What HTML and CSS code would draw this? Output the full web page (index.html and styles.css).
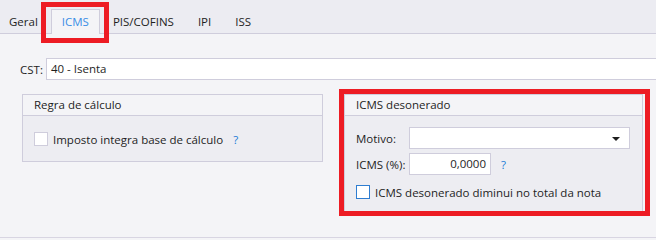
FILE: index.html
```html
<!DOCTYPE html>
<html lang="pt-BR">
<head>
  <meta charset="UTF-8" />
  <meta name="viewport" content="width=device-width, initial-scale=1.0" />
  <title>Tributação</title>
  <link rel="stylesheet" href="styles.css">
</head>
<body>
  <div class="tabs">
    <span class="tab">Geral</span>
    <span class="tab active">ICMS<span class="mark"></span></span>
    <span class="tab">PIS/COFINS</span>
    <span class="tab">IPI</span>
    <span class="tab">ISS</span>
  </div>

  <div class="content">
    <div class="cst-row">
      <label>CST:</label>
      <div class="field">40 - Isenta</div>
    </div>

    <div class="groups">
      <div class="group regra">
        <div class="group-title">Regra de cálculo</div>
        <div class="group-body">
          <div class="check-row">
            <span class="checkbox"></span>
            <span>Imposto integra base de cálculo</span>
            <span class="help">?</span>
          </div>
        </div>
      </div>

      <div class="group deson">
        <div class="group-title">ICMS desonerado</div>
        <div class="group-body">
          <div class="form-row">
            <label>Motivo:</label>
            <div class="field select"><span class="arrow"></span></div>
          </div>
          <div class="form-row">
            <label>ICMS (%):</label>
            <div class="field number">0,0000</div>
            <span class="help">?</span>
          </div>
          <div class="check-row">
            <span class="checkbox focus"></span>
            <span>ICMS desonerado diminui no total da nota</span>
          </div>
        </div>
        <span class="mark"></span>
      </div>
    </div>
  </div>

  <div class="footer"></div>
</body>
</html>
```

FILE: styles.css
```css
body {
  margin: 0;
  width: 656px;
  height: 240px;
  overflow: hidden;
  font-family: 'Open Sans', sans-serif;
  font-size: 11.5px;
  color: #1e1e1e;
  background: #f4f4f7;
}

/* abas */
.tabs {
  display: flex;
  align-items: flex-end;
  gap: 2px;
  height: 33px;
  background: #ececf2;
  border-bottom: 1px solid #cfcddc;
}

.tab {
  height: 24px;
  line-height: 24px;
  padding: 0 10px;
  border: 1px solid transparent;
  border-bottom: none;
  margin-bottom: -1px;
}

.tab:first-child {
  margin-left: -2px;
}

.tab.active {
  position: relative;
  background: #f4f4f7;
  border-color: #cfcddc;
  color: #3a8ee6;
}

.tab.active .mark {
  position: absolute;
  left: -11px;
  top: -8px;
  width: 58px;
  height: 31px;
  border: 5px solid #ed1c24;
}

/* conteudo */
.cst-row {
  display: flex;
  align-items: center;
  padding: 24px 0 0 20px;
}

.cst-row label {
  margin-right: 3px;
}

.field {
  height: 20px;
  line-height: 20px;
  border: 1px solid #cfcddc;
  background: #fff;
  padding: 0 4px;
}

.cst-row .field {
  flex: 1;
  margin-right: -10px;
}

.groups {
  display: flex;
  align-items: flex-start;
  gap: 21px;
  padding: 14px 0 0 22px;
}

.group {
  border: 1px solid #cfcddc;
  background: #ededf2;
}

.group.regra {
  width: 299px;
}

.group.deson {
  position: relative;
  width: 297px;
  height: 116px;
}

.group-title {
  height: 20px;
  line-height: 20px;
  padding-left: 11px;
  background: #f4f4f7;
  border-bottom: 1px solid #cfcddc;
}

.regra .group-body {
  padding: 15px 11px 14px;
}

.deson .group-body {
  padding: 11px 11px 0;
}

.check-row {
  display: flex;
  align-items: center;
  height: 16px;
}

.checkbox {
  width: 12px;
  height: 12px;
  border: 1px solid #cfcddc;
  background: #fff;
  margin-right: 5px;
}

.checkbox.focus {
  border-color: #2f7dd1;
}

.help {
  color: #1a7bd6;
  margin-left: 10px;
}

.form-row {
  display: flex;
  align-items: center;
  margin-bottom: 4px;
}

.form-row label {
  width: 53px;
}

.field.select {
  position: relative;
  width: 211px;
}

.arrow {
  position: absolute;
  right: 9px;
  top: 9px;
  border-left: 4px solid transparent;
  border-right: 4px solid transparent;
  border-top: 4px solid #1e1e1e;
}

.field.number {
  width: 72px;
  text-align: right;
}

.deson .check-row {
  margin-top: 9px;
}

.deson .mark {
  position: absolute;
  left: -6px;
  top: -6px;
  right: -8px;
  bottom: -5px;
  border: 5px solid #ed1c24;
}

.footer {
  position: fixed;
  left: 0;
  right: 0;
  top: 237px;
  height: 3px;
  border-top: 1px solid #d8d5e2;
  background: #f4f4f7;
}
```
